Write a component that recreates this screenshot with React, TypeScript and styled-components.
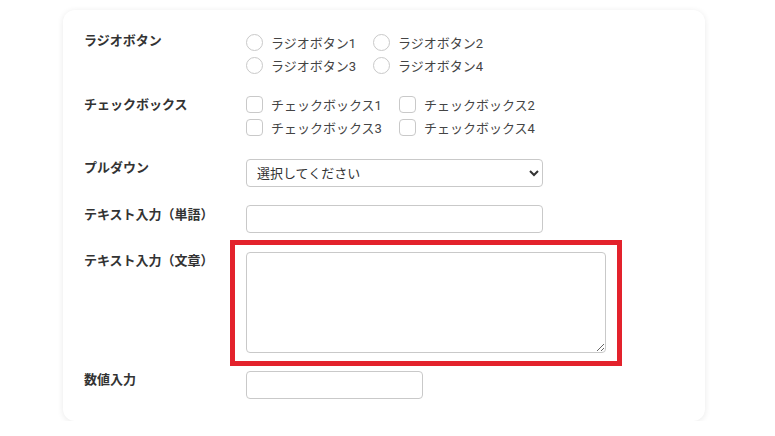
import React from "react";
import styled, { createGlobalStyle } from "styled-components";

const GlobalStyle = createGlobalStyle`
  html, body { margin: 0; padding: 0; background: #ffffff; }
  body { font-family: Roboto, "Noto Sans CJK JP", sans-serif; color: #333; }
  * { box-sizing: border-box; }
`;

const Page = styled.div`
  padding: 10px 0 0 63px;
`;

const Card = styled.div`
  width: 642px;
  height: 411px;
  background: #fff;
  border-radius: 12px;
  box-shadow: 0 1px 6px rgba(0, 0, 0, 0.09);
  padding: 21px 21px 22px 21px;
  display: flex;
  flex-direction: column;
`;

const Row = styled.div<{ $mt?: number }>`
  display: grid;
  grid-template-columns: 162px 1fr;
  align-items: start;
  margin-top: ${(p) => p.$mt ?? 0}px;
  position: relative;
`;

const Label = styled.div<{ $pt?: number }>`
  font-size: 13px;
  font-weight: 700;
  line-height: 18px;
  color: #333;
  padding-top: ${(p) => p.$pt ?? 0}px;
`;

const OptionGrid = styled.div`
  display: grid;
  grid-template-columns: max-content max-content;
  column-gap: 17px;
`;

const Option = styled.label`
  display: flex;
  align-items: center;
  height: 23px;
  font-size: 13px;
  color: #444;
  gap: 8px;
`;

const Radio = styled.input.attrs({ type: "radio" })`
  appearance: none;
  margin: 0;
  width: 17px;
  height: 17px;
  border: 1px solid #c9c9c9;
  border-radius: 50%;
  background: #fff;
`;

const Check = styled.input.attrs({ type: "checkbox" })`
  appearance: none;
  margin: 0;
  width: 17px;
  height: 17px;
  border: 1px solid #c9c9c9;
  border-radius: 4px;
  background: #fff;
`;

const Select = styled.select`
  width: 297px;
  height: 28px;
  border: 1px solid #c9c9c9;
  border-radius: 4px;
  background: #fff;
  font-family: Roboto, "Noto Sans CJK JP", sans-serif;
  font-size: 13px;
  color: #333;
  padding: 0 6px;
  margin: 0;
`;

const TextInput = styled.input<{ $w: number }>`
  width: ${(p) => p.$w}px;
  height: 28px;
  border: 1px solid #c9c9c9;
  border-radius: 4px;
  background: #fff;
  margin: 0;
  font-size: 13px;
`;

const TextArea = styled.textarea`
  width: 360px;
  height: 101px;
  border: 1px solid #c9c9c9;
  border-radius: 4px;
  background: #fff;
  margin: 0;
  display: block;
`;

const ControlCell = styled.div`
  position: relative;
`;

const Highlight = styled.div`
  position: absolute;
  left: -16px;
  top: -12px;
  width: 392px;
  height: 126px;
  border: 5px solid #e3222c;
  pointer-events: none;
`;

export default function App() {
  return (
    <>
      <GlobalStyle />
      <Page>
        <Card>
          <Row>
            <Label $pt={1}>ラジオボタン</Label>
            <OptionGrid>
              <Option><Radio name="r" />ラジオボタン1</Option>
              <Option><Radio name="r" />ラジオボタン2</Option>
              <Option><Radio name="r" />ラジオボタン3</Option>
              <Option><Radio name="r" />ラジオボタン4</Option>
            </OptionGrid>
          </Row>
          <Row $mt={16}>
            <Label $pt={3}>チェックボックス</Label>
            <OptionGrid>
              <Option><Check />チェックボックス1</Option>
              <Option><Check />チェックボックス2</Option>
              <Option><Check />チェックボックス3</Option>
              <Option><Check />チェックボックス4</Option>
            </OptionGrid>
          </Row>
          <Row $mt={20}>
            <Label $pt={0}>プルダウン</Label>
            <ControlCell>
              <Select defaultValue="">
                <option value="">選択してください</option>
              </Select>
            </ControlCell>
          </Row>
          <Row $mt={18}>
            <Label $pt={1}>テキスト入力（単語）</Label>
            <ControlCell>
              <TextInput type="text" $w={297} />
            </ControlCell>
          </Row>
          <Row $mt={19}>
            <Label $pt={0}>テキスト入力（文章）</Label>
            <ControlCell>
              <TextArea />
              <Highlight />
            </ControlCell>
          </Row>
          <Row $mt={18}>
            <Label $pt={0}>数値入力</Label>
            <ControlCell>
              <TextInput type="number" $w={177} />
            </ControlCell>
          </Row>
        </Card>
      </Page>
    </>
  );
}
